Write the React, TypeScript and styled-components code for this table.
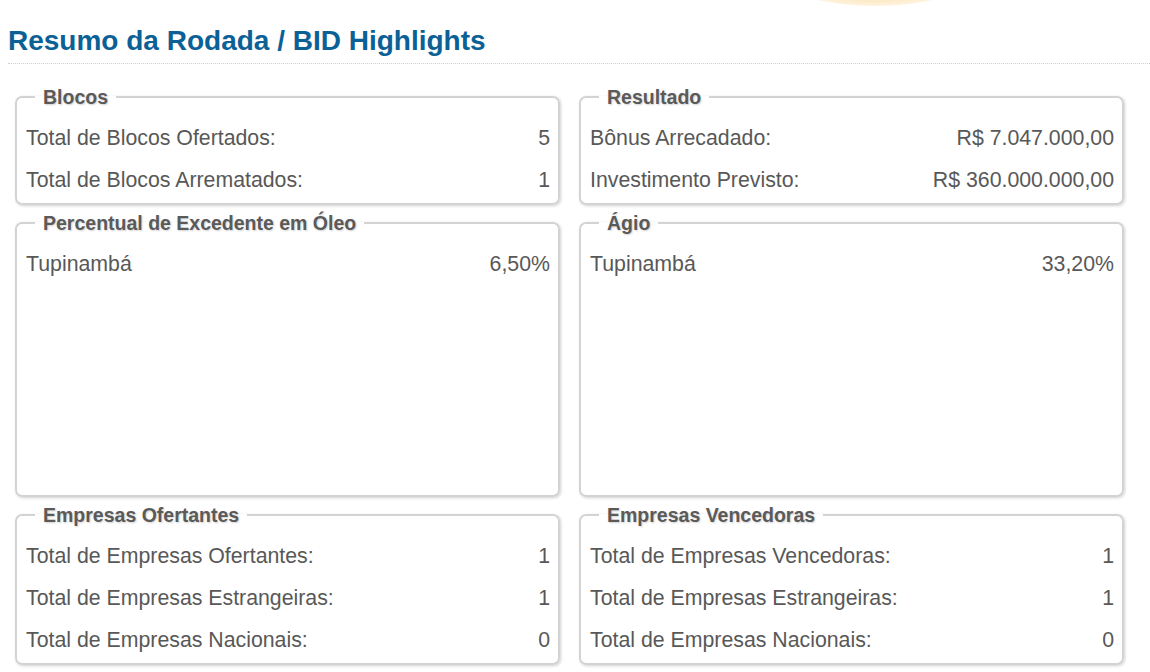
import React from "react";
import styled, { createGlobalStyle } from "styled-components";

const Global = createGlobalStyle`
  html, body { margin: 0; padding: 0; background: #fff; }
  body { font-family: "Liberation Sans", Arial, sans-serif; overflow: hidden; }
`;

const Page = styled.div`
  position: relative;
  width: 1150px;
  height: 672px;
  padding: 0 0 0 8px;
  box-sizing: border-box;
  overflow: hidden;
`;

const Glow = styled.div`
  position: absolute;
  left: 790px;
  top: -40px;
  width: 170px;
  height: 46px;
  border-radius: 50%;
  background: radial-gradient(ellipse at center, #fde8c0 0%, #fdebc8 55%, rgba(253, 240, 215, 0.6) 75%, rgba(255, 255, 255, 0) 100%);
`;

const Title = styled.h1`
  margin: 0;
  padding-top: 25px;
  height: 38px;
  font-size: 28px;
  line-height: 32px;
  font-weight: bold;
  color: #0b6196;
  border-bottom: 1px dotted #cfcfcf;
  box-sizing: content-box;
  padding-bottom: 0;
`;

const Grid = styled.div`
  display: grid;
  grid-template-columns: 545px 545px;
  column-gap: 19px;
  row-gap: 7px;
  margin: 22px 0 0 7px;
`;

const Box = styled.fieldset<{ $tall?: boolean }>`
  margin: 0;
  min-width: 0;
  padding: 9px 8px 2px 9px;
  border: 2px solid #d3d3d3;
  border-radius: 7px;
  box-shadow: 1px 1px 3px rgba(0, 0, 0, 0.18);
  height: ${(p) => (p.$tall ? "285px" : "auto")};
  box-sizing: border-box;
`;

const Legend = styled.legend`
  margin-left: 9px;
  padding: 0 8px;
  font-size: 19.5px;
  line-height: 22px;
  font-weight: bold;
  color: #5a5a5a;
  text-shadow: 1px 1px 2px rgba(0, 0, 0, 0.18);
`;

const Row = styled.div`
  display: flex;
  justify-content: space-between;
  align-items: center;
  height: 42px;
  font-size: 21.3px;
  color: #585858;
`;

type Item = [string, string];

const Panel = ({ title, items, tall }: { title: string; items: Item[]; tall?: boolean }) => (
  <Box $tall={tall}>
    <Legend>{title}</Legend>
    {items.map(([l, v]) => (
      <Row key={l}>
        <span>{l}</span>
        <span>{v}</span>
      </Row>
    ))}
  </Box>
);

export default function App() {
  return (
    <Page>
      <Global />
      <Glow />
      <Title>Resumo da Rodada / BID Highlights</Title>
      <Grid>
        <Panel
          title="Blocos"
          items={[
            ["Total de Blocos Ofertados:", "5"],
            ["Total de Blocos Arrematados:", "1"],
          ]}
        />
        <Panel
          title="Resultado"
          items={[
            ["Bônus Arrecadado:", "R$ 7.047.000,00"],
            ["Investimento Previsto:", "R$ 360.000.000,00"],
          ]}
        />
        <Panel title="Percentual de Excedente em Óleo" tall items={[["Tupinambá", "6,50%"]]} />
        <Panel title="Ágio" tall items={[["Tupinambá", "33,20%"]]} />
        <Panel
          title="Empresas Ofertantes"
          items={[
            ["Total de Empresas Ofertantes:", "1"],
            ["Total de Empresas Estrangeiras:", "1"],
            ["Total de Empresas Nacionais:", "0"],
          ]}
        />
        <Panel
          title="Empresas Vencedoras"
          items={[
            ["Total de Empresas Vencedoras:", "1"],
            ["Total de Empresas Estrangeiras:", "1"],
            ["Total de Empresas Nacionais:", "0"],
          ]}
        />
      </Grid>
    </Page>
  );
}
